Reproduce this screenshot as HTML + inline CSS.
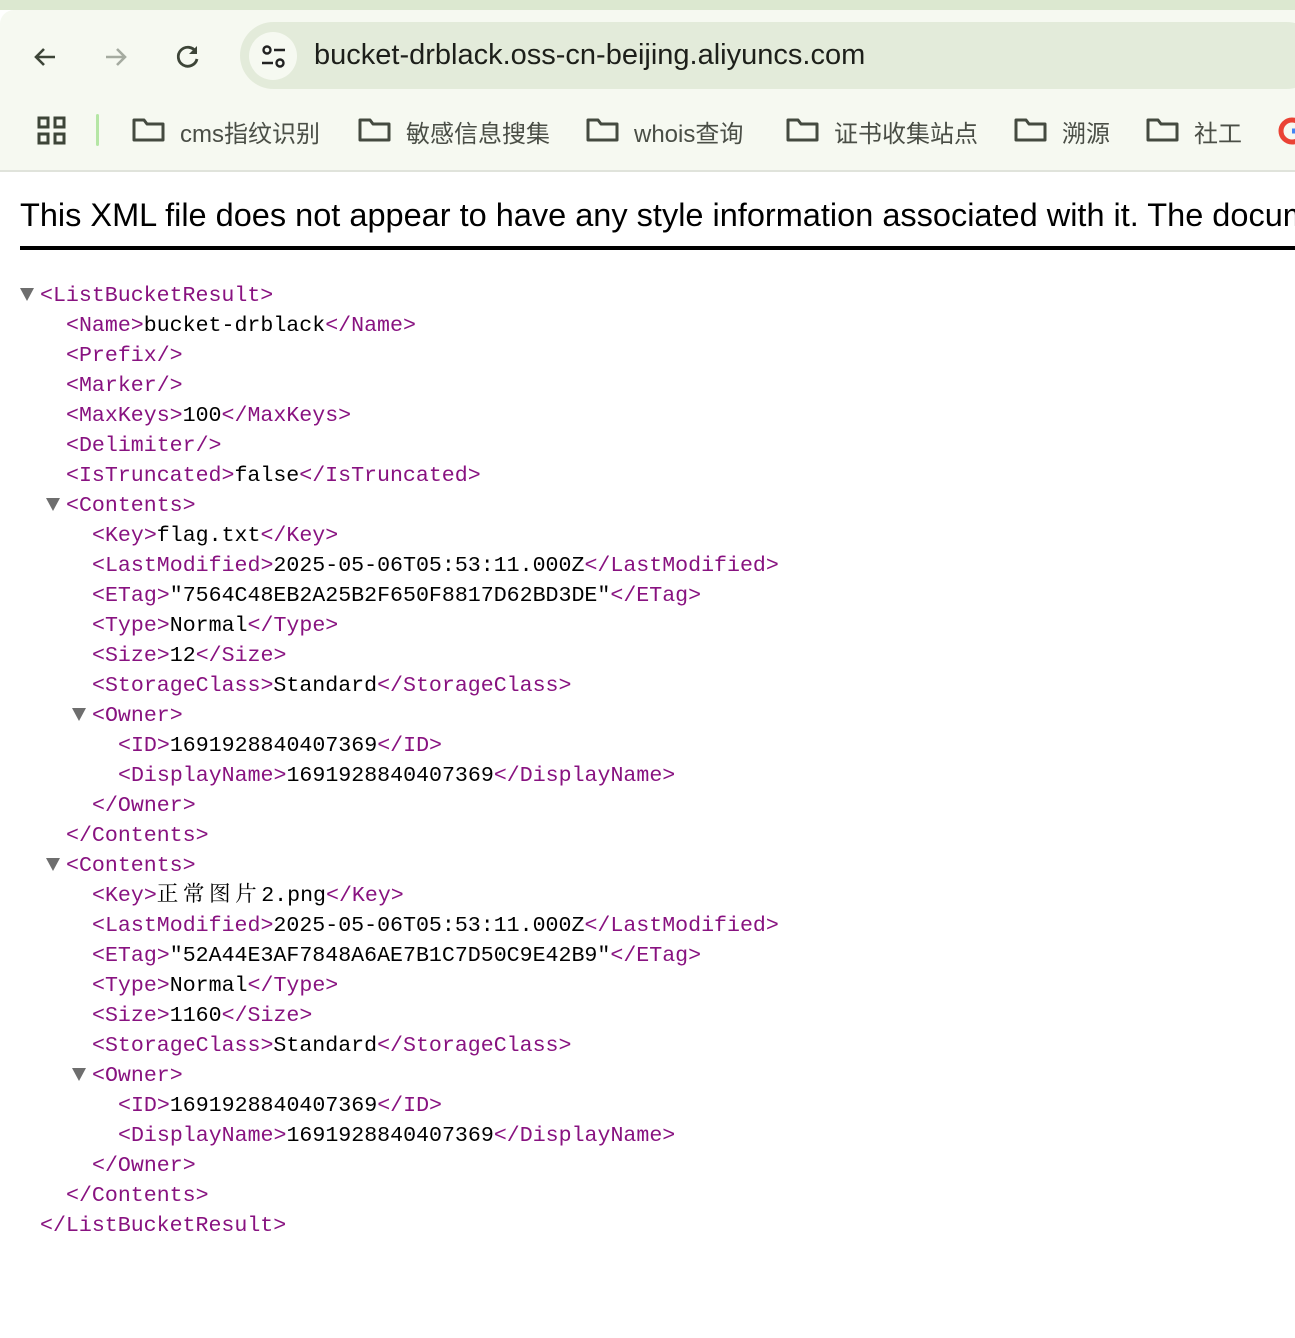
<!DOCTYPE html>
<html><head><meta charset="utf-8"><style>
body{margin:0;width:1295px;height:1338px;overflow:hidden;background:#fff;position:relative;font-family:"Liberation Sans","Noto Sans CJK SC",sans-serif}
.top{position:absolute;left:0;top:0;width:1295px;height:10px;background:#dce8d0}
.bar{position:absolute;left:0;top:10px;width:1295px;height:160px;background:#f6f9f1;border-top-left-radius:14px}
.sep{position:absolute;left:0;top:170px;width:1295px;height:2px;background:#e0e3db}
.url{position:absolute;left:240px;top:22px;width:1080px;height:67px;background:#e3ebda;border-radius:34px}
.site{position:absolute;left:249px;top:32px;width:48px;height:48px;border-radius:50%;background:#f6f9f1}
.urltext{position:absolute;left:314px;top:39px;font-size:29px;color:#1d1f1a;white-space:nowrap}
.bm{position:absolute;top:114px;font-size:24px;color:#4a4e46;white-space:nowrap}
.h{position:absolute;left:20px;top:197px;width:1275px;height:49px;border-bottom:4px solid #000;font-size:32.5px;white-space:nowrap;overflow:hidden;color:#000}
.x{position:absolute;left:0;top:281px;font-family:"Liberation Mono","Noto Serif CJK SC",monospace;font-size:21.6px;line-height:30px;color:#000}
.x div{height:30px;position:relative;width:1000px}
.x div>span{white-space:pre}
.t{color:#881280}
.tri{position:absolute;width:0;height:0;border-left:7px solid transparent;border-right:7px solid transparent;border-top:13px solid #6e6e6e;top:7px}
.cj{letter-spacing:4.5px}
</style></head><body>
<div class="top"></div><div class="bar"></div><div class="sep"></div>
<svg style="position:absolute;left:30px;top:42px" width="30" height="30" viewBox="0 0 30 30"><path d="M25 15H6M14 7l-8 8 8 8" stroke="#3d4538" stroke-width="2.6" fill="none"/></svg>
<svg style="position:absolute;left:101px;top:42px" width="30" height="30" viewBox="0 0 30 30"><path d="M5 15h19M16 7l8 8-8 8" stroke="#a5aba0" stroke-width="2.6" fill="none"/></svg>
<svg style="position:absolute;left:173px;top:41px" width="30" height="30" viewBox="0 0 30 30"><path d="M23 11A9.5 9.5 0 1 0 24 18" stroke="#3d4538" stroke-width="2.8" fill="none"/><path d="M24 5v8h-8z" fill="#3d4538"/></svg>
<div class="url"></div><div class="site"></div>
<svg style="position:absolute;left:259px;top:42px" width="30" height="30" viewBox="0 0 30 30"><circle cx="8" cy="8" r="3.5" stroke="#222" stroke-width="2.4" fill="none"/><path d="M15 8h11M3 21h11" stroke="#222" stroke-width="2.6"/><circle cx="21" cy="21" r="3.5" stroke="#222" stroke-width="2.4" fill="none"/></svg>
<div class="urltext">bucket-drblack.oss-cn-beijing.aliyuncs.com</div>
<svg style="position:absolute;left:37px;top:116px" width="30" height="30" viewBox="0 0 30 30"><g fill="none" stroke="#3d4538" stroke-width="3"><rect x="2" y="2" width="9" height="9"/><rect x="18" y="2" width="9" height="9"/><rect x="2" y="18" width="9" height="9"/><rect x="18" y="18" width="9" height="9"/></g></svg>
<div style="position:absolute;left:96px;top:114px;width:3px;height:32px;background:#b5e6a5;border-radius:2px"></div>
<svg style="position:absolute;left:0;top:0" width="1295" height="170"><g fill="none" stroke="#444a40" stroke-width="3" stroke-linejoin="round"><path d="M134 120h10l3 4h16v16h-29z"/><path d="M360 120h10l3 4h16v16h-29z"/><path d="M588 120h10l3 4h16v16h-29z"/><path d="M788 120h10l3 4h16v16h-29z"/><path d="M1016 120h10l3 4h16v16h-29z"/><path d="M1148 120h10l3 4h16v16h-29z"/></g>
<circle cx="1292" cy="131" r="11" fill="none" stroke="#ea4335" stroke-width="5"/><path d="M1292 131h10" stroke="#4285f4" stroke-width="5"/></svg>
<div class="bm" style="left:180px">cms指纹识别</div>
<div class="bm" style="left:406px">敏感信息搜集</div>
<div class="bm" style="left:634px">whois查询</div>
<div class="bm" style="left:834px">证书收集站点</div>
<div class="bm" style="left:1062px">溯源</div>
<div class="bm" style="left:1194px">社工</div>
<div class="h">This XML file does not appear to have any style information associated with it. The document tree is shown below.</div>
<div class="x"><div><span class="tri" style="left:20px"></span><span style="position:absolute;left:40px"><span class="t">&lt;ListBucketResult&gt;</span></span></div><div><span style="position:absolute;left:66px"><span class="t">&lt;Name&gt;</span>bucket-drblack<span class="t">&lt;/Name&gt;</span></span></div><div><span style="position:absolute;left:66px"><span class="t">&lt;Prefix/&gt;</span></span></div><div><span style="position:absolute;left:66px"><span class="t">&lt;Marker/&gt;</span></span></div><div><span style="position:absolute;left:66px"><span class="t">&lt;MaxKeys&gt;</span>100<span class="t">&lt;/MaxKeys&gt;</span></span></div><div><span style="position:absolute;left:66px"><span class="t">&lt;Delimiter/&gt;</span></span></div><div><span style="position:absolute;left:66px"><span class="t">&lt;IsTruncated&gt;</span>false<span class="t">&lt;/IsTruncated&gt;</span></span></div><div><span class="tri" style="left:46px"></span><span style="position:absolute;left:66px"><span class="t">&lt;Contents&gt;</span></span></div><div><span style="position:absolute;left:92px"><span class="t">&lt;Key&gt;</span>flag.txt<span class="t">&lt;/Key&gt;</span></span></div><div><span style="position:absolute;left:92px"><span class="t">&lt;LastModified&gt;</span>2025-05-06T05:53:11.000Z<span class="t">&lt;/LastModified&gt;</span></span></div><div><span style="position:absolute;left:92px"><span class="t">&lt;ETag&gt;</span>"7564C48EB2A25B2F650F8817D62BD3DE"<span class="t">&lt;/ETag&gt;</span></span></div><div><span style="position:absolute;left:92px"><span class="t">&lt;Type&gt;</span>Normal<span class="t">&lt;/Type&gt;</span></span></div><div><span style="position:absolute;left:92px"><span class="t">&lt;Size&gt;</span>12<span class="t">&lt;/Size&gt;</span></span></div><div><span style="position:absolute;left:92px"><span class="t">&lt;StorageClass&gt;</span>Standard<span class="t">&lt;/StorageClass&gt;</span></span></div><div><span class="tri" style="left:72px"></span><span style="position:absolute;left:92px"><span class="t">&lt;Owner&gt;</span></span></div><div><span style="position:absolute;left:118px"><span class="t">&lt;ID&gt;</span>1691928840407369<span class="t">&lt;/ID&gt;</span></span></div><div><span style="position:absolute;left:118px"><span class="t">&lt;DisplayName&gt;</span>1691928840407369<span class="t">&lt;/DisplayName&gt;</span></span></div><div><span style="position:absolute;left:92px"><span class="t">&lt;/Owner&gt;</span></span></div><div><span style="position:absolute;left:66px"><span class="t">&lt;/Contents&gt;</span></span></div><div><span class="tri" style="left:46px"></span><span style="position:absolute;left:66px"><span class="t">&lt;Contents&gt;</span></span></div><div><span style="position:absolute;left:92px"><span class="t">&lt;Key&gt;</span><span class="cj">正常图片</span>2.png<span class="t">&lt;/Key&gt;</span></span></div><div><span style="position:absolute;left:92px"><span class="t">&lt;LastModified&gt;</span>2025-05-06T05:53:11.000Z<span class="t">&lt;/LastModified&gt;</span></span></div><div><span style="position:absolute;left:92px"><span class="t">&lt;ETag&gt;</span>"52A44E3AF7848A6AE7B1C7D50C9E42B9"<span class="t">&lt;/ETag&gt;</span></span></div><div><span style="position:absolute;left:92px"><span class="t">&lt;Type&gt;</span>Normal<span class="t">&lt;/Type&gt;</span></span></div><div><span style="position:absolute;left:92px"><span class="t">&lt;Size&gt;</span>1160<span class="t">&lt;/Size&gt;</span></span></div><div><span style="position:absolute;left:92px"><span class="t">&lt;StorageClass&gt;</span>Standard<span class="t">&lt;/StorageClass&gt;</span></span></div><div><span class="tri" style="left:72px"></span><span style="position:absolute;left:92px"><span class="t">&lt;Owner&gt;</span></span></div><div><span style="position:absolute;left:118px"><span class="t">&lt;ID&gt;</span>1691928840407369<span class="t">&lt;/ID&gt;</span></span></div><div><span style="position:absolute;left:118px"><span class="t">&lt;DisplayName&gt;</span>1691928840407369<span class="t">&lt;/DisplayName&gt;</span></span></div><div><span style="position:absolute;left:92px"><span class="t">&lt;/Owner&gt;</span></span></div><div><span style="position:absolute;left:66px"><span class="t">&lt;/Contents&gt;</span></span></div><div><span style="position:absolute;left:40px"><span class="t">&lt;/ListBucketResult&gt;</span></span></div></div>
</body></html>
